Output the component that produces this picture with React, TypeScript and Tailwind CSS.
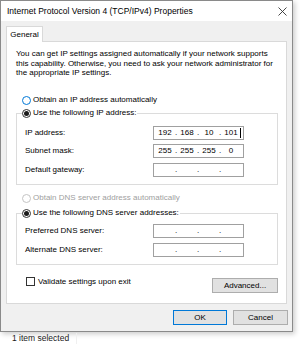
import React from "react";

function Radio({ checked = false, variant = "normal" }: { checked?: boolean; variant?: "normal" | "focus" | "disabled" }) {
  const border =
    variant === "focus" ? "border-[#0078d7]" : variant === "disabled" ? "border-[#c4c4c4]" : "border-[#333333]";
  return (
    <span className={`w-[9px] h-[9px] rounded-full border ${border} bg-white flex items-center justify-center shrink-0`}>
      {checked && <span className="w-[5px] h-[5px] rounded-full bg-[#1a1a1a]" />}
    </span>
  );
}

function IpInput({ values, caret = false }: { values?: string[]; caret?: boolean }) {
  const v = values ?? ["", "", "", ""];
  return (
    <div className="w-[91px] h-[14px] border border-[#a0a0a0] bg-white flex items-center pl-[2px] text-[8px] leading-[12px]">
      {v.map((s, i) => (
        <React.Fragment key={i}>
          <span className="w-[18px] text-center relative">
            {s}
            {caret && i === 3 && <span className="absolute right-[-1px] top-[1px] w-px h-[10px] bg-black" />}
          </span>
          {i < 3 && <span className="w-[4px] text-center">.</span>}
        </React.Fragment>
      ))}
    </div>
  );
}

function Row({ label, children, className = "" }: { label: string; children: React.ReactNode; className?: string }) {
  return (
    <div className={`flex items-center h-[14px] pl-[8px] ${className}`}>
      <span className="w-[128px] text-[8px] leading-[10px]">{label}</span>
      {children}
    </div>
  );
}

export default function App() {
  return (
    <div className="w-[300px] h-[345px] bg-white relative overflow-hidden text-black font-['Liberation_Sans',Arial,sans-serif]">
      <div className="w-[293px] h-[332px] border border-[#8a8a8a] bg-[#f0f0f0] flex flex-col shadow-[2px_2px_5px_rgba(0,0,0,0.2)]">
        {/* title bar */}
        <div className="h-[20px] bg-white flex items-center justify-between pl-[6px] pr-[5px]">
          <span className="text-[8.5px] leading-[12px]">Internet Protocol Version 4 (TCP/IPv4) Properties</span>
          <svg width="9" height="9" viewBox="0 0 9 9" className="text-[#333]">
            <path d="M0.5 0.5L8.5 8.5M8.5 0.5L0.5 8.5" stroke="currentColor" strokeWidth="0.9" />
          </svg>
        </div>

        {/* tab */}
        <div className="mt-[5px] ml-[5px] w-[37px] h-[16px] border border-b-0 border-[#d9d9d9] bg-white relative z-10 flex items-center justify-center text-[8px] leading-[10px]">
          General
        </div>

        {/* panel */}
        <div className="-mt-px mx-[5px] h-[263px] border border-[#d9d9d9] bg-white flex flex-col pl-[9px] pr-[8px] pt-[7px]">
          <p className="text-[8px] leading-[9.5px]">
            You can get IP settings assigned automatically if your network supports this capability. Otherwise, you need to ask your network administrator for the appropriate IP settings.
          </p>

          <div className="mt-[17.5px] h-[10px] flex items-center pl-[6px] gap-[2px]">
            <Radio variant="focus" />
            <span className="text-[8px] leading-[10px]">Obtain an IP address automatically</span>
          </div>

          <div className="mt-[8px] h-[72px] border border-[#dcdcdc] relative pt-[12px]">
            <div className="absolute left-[5px] top-[-6px] h-[10px] flex items-center gap-[2px] bg-white pr-[1px]">
              <Radio checked />
              <span className="text-[8px] leading-[10px]">Use the following IP address:</span>
            </div>
            <Row label="IP address:">
              <IpInput values={["192", "168", "10", "101"]} caret />
            </Row>
            <Row label="Subnet mask:" className="mt-[4px]">
              <IpInput values={["255", "255", "255", "0"]} />
            </Row>
            <Row label="Default gateway:" className="mt-[5px]">
              <IpInput />
            </Row>
          </div>

          <div className="mt-[8px] h-[10px] flex items-center pl-[6px] gap-[2px]">
            <Radio variant="disabled" />
            <span className="text-[8px] leading-[10px] text-[#a0a0a0]">Obtain DNS server address automatically</span>
          </div>

          <div className="mt-[10px] h-[52px] border border-[#dcdcdc] relative pt-[10px]">
            <div className="absolute left-[5px] top-[-6px] h-[10px] flex items-center gap-[2px] bg-white pr-[1px]">
              <Radio checked />
              <span className="text-[8px] leading-[10px]">Use the following DNS server addresses:</span>
            </div>
            <Row label="Preferred DNS server:">
              <IpInput />
            </Row>
            <Row label="Alternate DNS server:" className="mt-[5px]">
              <IpInput />
            </Row>
          </div>

          <div className="mt-[12px] flex justify-between items-start">
            <div className="flex items-center h-[9px] pl-[10px] gap-[3px]">
              <span className="w-[9px] h-[9px] border border-[#333] bg-white shrink-0" />
              <span className="text-[8px] leading-[10px]">Validate settings upon exit</span>
            </div>
            <div className="mt-[1px] w-[66px] h-[15px] border border-[#adadad] bg-[#e1e1e1] flex items-center justify-center text-[8px] leading-[10px]">
              Advanced...
            </div>
          </div>
        </div>

        {/* buttons */}
        <div className="mt-[6px] flex justify-end gap-[6px] pr-[4px]">
          <div className="w-[54px] h-[15px] border border-[#0078d7] bg-[#e1e1e1] flex items-center justify-center text-[8px] leading-[10px]">
            OK
          </div>
          <div className="w-[55px] h-[15px] border border-[#adadad] bg-[#e1e1e1] flex items-center justify-center text-[8px] leading-[10px]">
            Cancel
          </div>
        </div>
      </div>

      {/* status bar */}
      <div className="h-[13px] flex items-center">
        <span className="pl-[12px] w-[77px] text-[8.5px] leading-[11px] text-[#1a1a1a] border-r border-[#f0f0f0]">1 item selected</span>
      </div>
    </div>
  );
}
